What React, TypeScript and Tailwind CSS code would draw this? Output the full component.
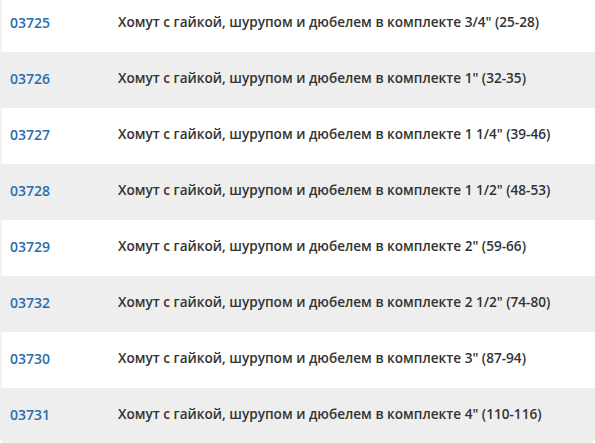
import React from 'react';

const ITEMS = [
  { code: '03725', size: '3/4" (25-28)' },
  { code: '03726', size: '1" (32-35)' },
  { code: '03727', size: '1 1/4" (39-46)' },
  { code: '03728', size: '1 1/2" (48-53)' },
  { code: '03729', size: '2" (59-66)' },
  { code: '03732', size: '2 1/2" (74-80)' },
  { code: '03730', size: '3" (87-94)' },
  { code: '03731', size: '4" (110-116)' },
];

const App = () => {
  return (
    <div className="w-[595px] h-[443px] overflow-hidden bg-white" style={{ fontFamily: '"Open Sans", "Noto Sans", sans-serif' }}>
      <div className="-mt-1 rounded-b-lg overflow-hidden">
        {ITEMS.map((item, i) => (
          <div
            key={item.code}
            className={
              i % 2 === 1
                ? 'flex items-center h-14 pb-1 bg-[#eeeeee]'
                : 'flex items-center h-14 pb-1 bg-white border-l-2 border-[#f3f3f3]'
            }
          >
            <div className={i % 2 === 1 ? 'w-[118px] pl-[10px] shrink-0' : 'w-[116px] pl-2 shrink-0'}>
              <span className="text-[14px] font-semibold text-[#2a6dab]">{item.code}</span>
            </div>
            <div className="text-[13.6px] font-semibold text-[#333333] whitespace-nowrap">
              Хомут с гайкой, шурупом и дюбелем в комплекте {item.size}
            </div>
          </div>
        ))}
      </div>
    </div>
  );
};

export default App;
